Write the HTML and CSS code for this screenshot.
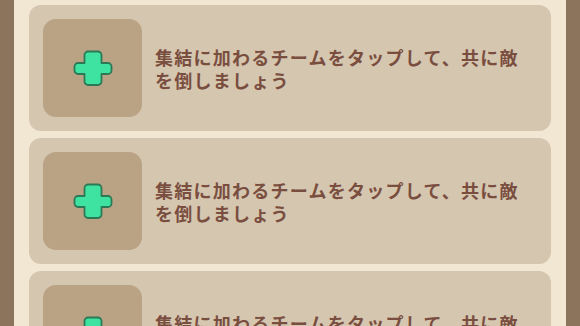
FILE: index.html
```html
<!DOCTYPE html>
<html lang="ja">
<head>
<meta charset="utf-8">
<link rel="stylesheet" href="styles.css">
</head>
<body>
<div class="frame">
  <div class="panel">
    <div class="card">
      <div class="slot">
        <svg class="plus" viewBox="0 0 40 40" width="40" height="40"><path d="M15 3.5 h10 a3.5 3.5 0 0 1 3.5 3.5 v8 h6.5 a3.5 3.5 0 0 1 3.5 3.5 v4 a3.5 3.5 0 0 1 -3.5 3.5 h-6.5 v7.5 a3.5 3.5 0 0 1 -3.5 3.5 h-10 a3.5 3.5 0 0 1 -3.5 -3.5 v-7.5 h-6.5 a3.5 3.5 0 0 1 -3.5 -3.5 v-4 a3.5 3.5 0 0 1 3.5 -3.5 h6.5 v-8 a3.5 3.5 0 0 1 3.5 -3.5 z" fill="#3ee3a2" stroke="#2c7a55" stroke-width="1.8" stroke-linejoin="round"/></svg>
      </div>
      <p class="msg">集結に加わるチームをタップして、共に敵を倒しましょう</p>
    </div>
    <div class="card">
      <div class="slot">
        <svg class="plus" viewBox="0 0 40 40" width="40" height="40"><path d="M15 3.5 h10 a3.5 3.5 0 0 1 3.5 3.5 v8 h6.5 a3.5 3.5 0 0 1 3.5 3.5 v4 a3.5 3.5 0 0 1 -3.5 3.5 h-6.5 v7.5 a3.5 3.5 0 0 1 -3.5 3.5 h-10 a3.5 3.5 0 0 1 -3.5 -3.5 v-7.5 h-6.5 a3.5 3.5 0 0 1 -3.5 -3.5 v-4 a3.5 3.5 0 0 1 3.5 -3.5 h6.5 v-8 a3.5 3.5 0 0 1 3.5 -3.5 z" fill="#3ee3a2" stroke="#2c7a55" stroke-width="1.8" stroke-linejoin="round"/></svg>
      </div>
      <p class="msg">集結に加わるチームをタップして、共に敵を倒しましょう</p>
    </div>
    <div class="card">
      <div class="slot">
        <svg class="plus" viewBox="0 0 40 40" width="40" height="40"><path d="M15 3.5 h10 a3.5 3.5 0 0 1 3.5 3.5 v8 h6.5 a3.5 3.5 0 0 1 3.5 3.5 v4 a3.5 3.5 0 0 1 -3.5 3.5 h-6.5 v7.5 a3.5 3.5 0 0 1 -3.5 3.5 h-10 a3.5 3.5 0 0 1 -3.5 -3.5 v-7.5 h-6.5 a3.5 3.5 0 0 1 -3.5 -3.5 v-4 a3.5 3.5 0 0 1 3.5 -3.5 h6.5 v-8 a3.5 3.5 0 0 1 3.5 -3.5 z" fill="#3ee3a2" stroke="#2c7a55" stroke-width="1.8" stroke-linejoin="round"/></svg>
      </div>
      <p class="msg">集結に加わるチームをタップして、共に敵を倒しましょう</p>
    </div>
  </div>
</div>
</body>
</html>
```
FILE: styles.css
```css
html, body {
  margin: 0;
  padding: 0;
  width: 580px;
  height: 326px;
  overflow: hidden;
  background: #8b735c;
}
.frame {
  margin: 0 14px;
  width: 552px;
  height: 326px;
  background: #f1e7d3;
  overflow: hidden;
}
.panel {
  display: flex;
  flex-direction: column;
  gap: 7px;
  padding: 5px 15px 0 15px;
}
.card {
  flex: 0 0 auto;
  height: 126px;
  box-sizing: border-box;
  background: #d5c6b0;
  border-radius: 12px;
  padding: 14px;
  display: flex;
  align-items: flex-start;
  gap: 13px;
}
.slot {
  flex: 0 0 auto;
  width: 99px;
  height: 98px;
  border-radius: 13px;
  background: #baa285;
  display: flex;
  align-items: center;
  justify-content: center;
}
.plus {
  display: block;
}
.msg {
  margin: 27px 0 0 0;
  width: 372px;
  font-family: "Noto Sans CJK JP", "Noto Sans", sans-serif;
  font-weight: 700;
  font-size: 18px;
  line-height: 23px;
  letter-spacing: 1.25px;
  color: #7a4e3f;
}
```
